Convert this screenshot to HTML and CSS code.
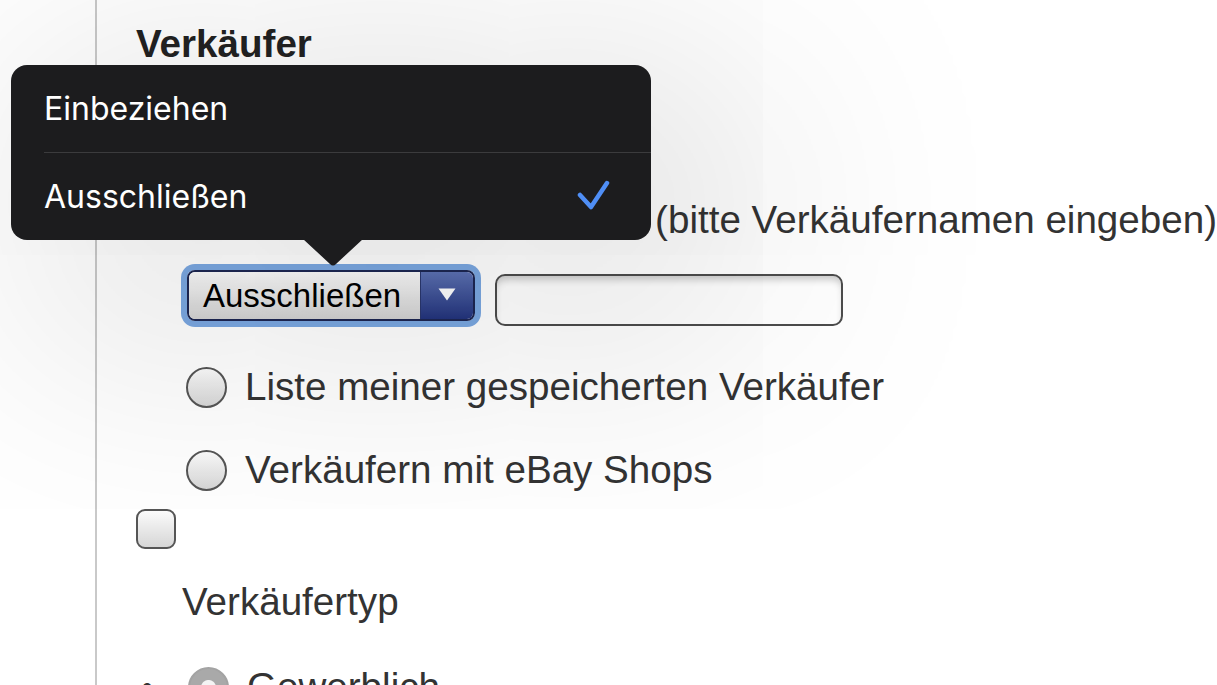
FILE: index.html
```html
<!DOCTYPE html>
<html lang="de">
<head>
<meta charset="utf-8">
<title>Verkäufer</title>
<link rel="stylesheet" href="styles.css">
</head>
<body>
<div class="page">
  <div class="gutter"></div>
  <main class="content">
    <h2 class="title">Verkäufer</h2>
    <div class="row spec-row">
      <span class="hint">(bitte Verkäufernamen eingeben)</span>
    </div>
    <div class="select-row">
      <div class="select">
        <span class="select-value">Ausschließen</span>
        <span class="select-btn"><svg width="18" height="13" viewBox="0 0 18 13"><path d="M0.5 0.5 H17.5 L9 12.5 Z" fill="#fff"/></svg></span>
      </div>
      <div class="text-input"></div>
    </div>
    <div class="row radio-row"><span class="radio"></span><span class="label">Liste meiner gespeicherten Verkäufer</span></div>
    <div class="row radio-row"><span class="radio"></span><span class="label">Verkäufern mit eBay Shops</span></div>
    <div class="check-row"><span class="checkbox"></span></div>
    <div class="subhead">Verkäufertyp</div>
    <div class="row type-row"><span class="bullet">•</span><span class="radio radio-on"></span><span class="label">Gewerblich</span></div>
  </main>

  <div class="popover">
    <div class="pop-item pop-first"><span>Einbeziehen</span></div>
    <div class="pop-item"><span>Ausschließen</span>
      <svg class="check" width="36" height="32" viewBox="0 0 36 32"><polyline points="4,15 15,27 31,3" fill="none" stroke="#4f8ef5" stroke-width="4.5" stroke-linecap="round" stroke-linejoin="round"/></svg>
    </div>
  </div>
  <svg class="pop-arrow" width="60" height="28" viewBox="0 0 60 28"><path d="M0 0 H60 L33 25 Q30 28 27 25 Z" fill="#1c1c1e"/></svg>
</div>
</body>
</html>
```

FILE: styles.css
```css
html, body {
  margin: 0;
  padding: 0;
  background: #ffffff;
}
body {
  font-family: "Liberation Sans", Arial, sans-serif;
  color: #333333;
}
.page {
  position: relative;
  width: 1217px;
  height: 685px;
  overflow: hidden;
  display: flex;
  background: #ffffff;
}
.gutter {
  width: 95px;
  flex: none;
  border-right: 2px solid #c9c9c9;
}
.content {
  flex: 1;
  padding-left: 39px;
  min-width: 0;
}
.title {
  margin: 22px 0 0;
  font-size: 38.6px;
  line-height: 44px;
  font-weight: bold;
  color: #222222;
}
.row {
  display: flex;
  align-items: center;
  height: 44px;
  font-size: 38.6px;
  line-height: 44px;
  white-space: nowrap;
}
.spec-row {
  margin-top: 132px;
  padding-left: 50px;
}
.hint {
  margin-left: auto;
}
.radio {
  width: 37px;
  height: 37px;
  flex: none;
  border: 2px solid #555555;
  border-radius: 50%;
  background: linear-gradient(#fbfbfb, #d6d6d6);
}
.radio-row {
  margin-top: 39px;
  padding-left: 50px;
}
.radio-row .label {
  margin-left: 18px;
}
.select-row {
  display: flex;
  align-items: flex-start;
  margin-top: 28px;
  padding-left: 51px;
  gap: 20px;
}
.select {
  display: flex;
  width: 284px;
  height: 47px;
  border: 2px solid #1d2753;
  border-radius: 8px;
  overflow: hidden;
  box-shadow: 0 0 0 6px #7ba8e2;
}
.select-value {
  flex: 1;
  padding-left: 14px;
  font-size: 33px;
  line-height: 47px;
  color: #000000;
  background: linear-gradient(#fbfbfb, #d3d3d3);
}
.select-btn {
  width: 52px;
  flex: none;
  display: flex;
  align-items: center;
  justify-content: center;
  border-left: 1px solid #2a376e;
  background: linear-gradient(#5d72b4, #23347d);
}
.select-btn svg {
  margin-top: -2px;
}
.text-input {
  margin-top: 4px;
  width: 344px;
  height: 48px;
  border: 2px solid #4c4c4c;
  border-radius: 10px;
  background: #ffffff;
  box-shadow: inset 0 6px 7px -2px rgba(0, 0, 0, 0.2);
}
.check-row {
  margin-top: 17px;
  height: 40px;
}
.checkbox {
  display: block;
  width: 36px;
  height: 36px;
  border: 2px solid #555555;
  border-radius: 9px;
  background: linear-gradient(#fbfbfb, #d6d6d6);
}
.subhead {
  margin: 31px 0 0 46px;
  font-size: 38.6px;
  line-height: 44px;
}
.type-row {
  margin-top: 41px;
  padding-left: 6px;
  align-items: flex-start;
}
.bullet {
  font-size: 30px;
  width: 46px;
}
.type-row .radio {
  margin-top: 2px;
}
.radio-on {
  border-color: #a3a3a3;
  background: radial-gradient(circle at 50% 50%, #f4f4f4 0, #f4f4f4 7px, #a9a9a9 8px);
}
.type-row .label {
  margin-left: 18px;
}

/* popover */
.popover {
  position: absolute;
  left: 11px;
  top: 65px;
  width: 640px;
  height: 175px;
  border-radius: 16px;
  background: #1c1c1e;
  box-shadow: 60px 50px 340px 50px rgba(0, 0, 0, 0.13);
  font-family: Inter, "Noto Sans", sans-serif;
  color: #ffffff;
}
.pop-item {
  display: flex;
  align-items: center;
  height: 87px;
  margin-left: 33px;
  font-size: 32px;
}
.pop-first {
  border-bottom: 1px solid #3b3b3d;
}
.check {
  margin-left: auto;
  margin-right: 39px;
  margin-top: -2px;
}
.pop-arrow {
  position: absolute;
  left: 303px;
  top: 239px;
}
```
